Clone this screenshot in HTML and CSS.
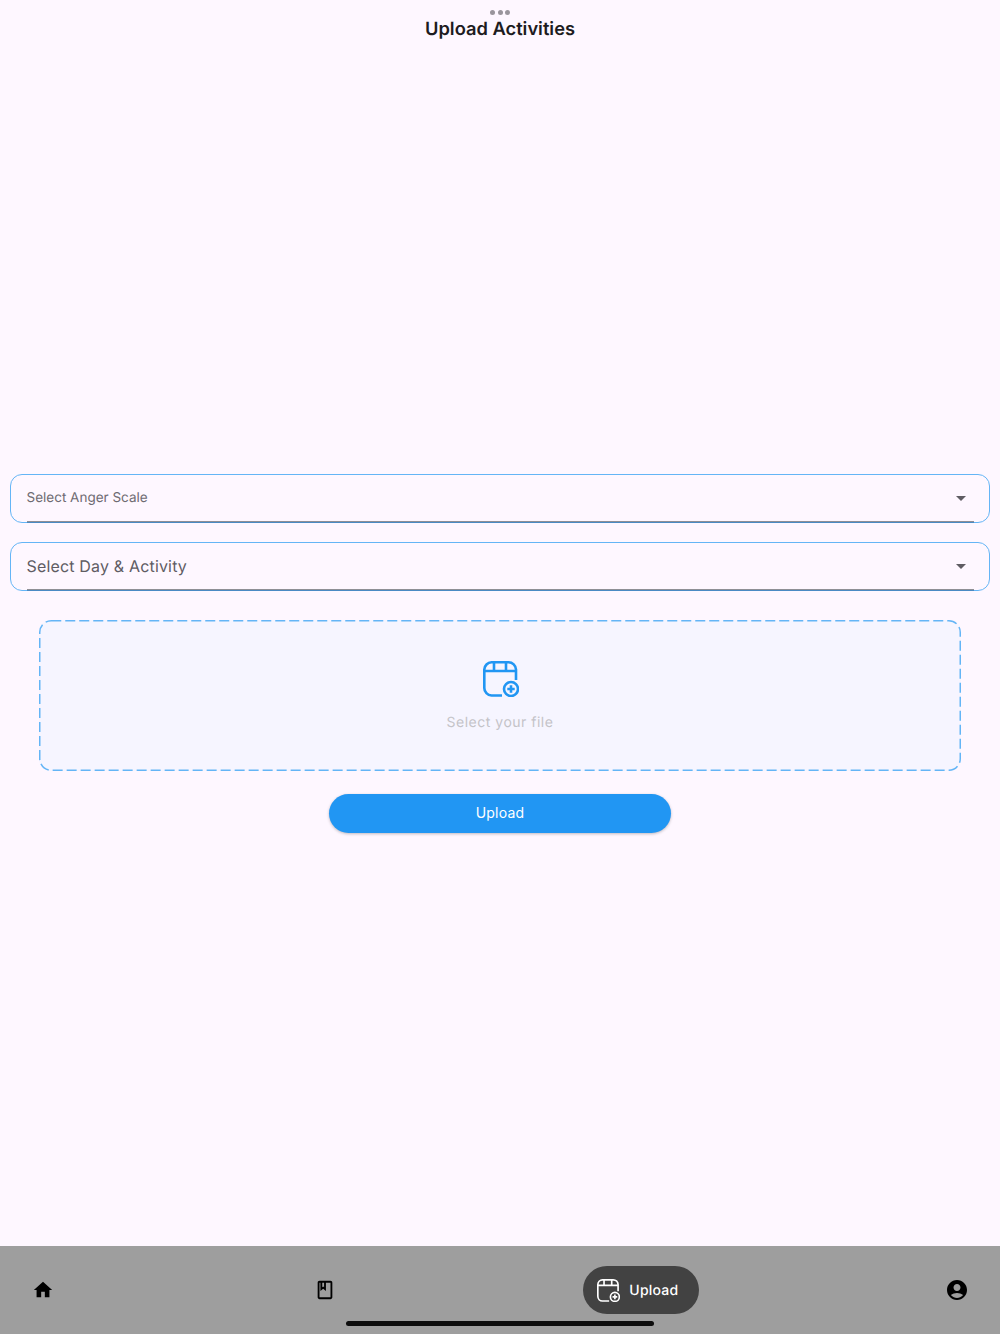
FILE: index.html
```html
<!DOCTYPE html>
<html lang="en">
  <head>
    <meta charset="UTF-8" />
    <title>Upload Activities</title>
    <link rel="stylesheet" href="styles.css">
  </head>
  <body>
    <header class="top-bar">
      <div class="dots"><span></span><span></span><span></span></div>
      <h1>Upload Activities</h1>
    </header>

    <main class="content">
      <div class="select-field">
        <span class="select-label small">Select Anger Scale</span>
        <span class="arrow"></span>
      </div>
      <div class="select-field second">
        <span class="select-label">Select Day &amp; Activity</span>
        <span class="arrow"></span>
      </div>

      <!-- Area de arquivo -->
      <div class="dropzone">
        <svg class="dash" viewBox="0 0 922 151" aria-hidden="true">
          <rect x="0.75" y="0.75" width="920.5" height="149.5" rx="11.5" />
        </svg>
        <svg class="file-icon" viewBox="0 0 36 36" aria-hidden="true">
          <use href="#calendar-plus" />
        </svg>
        <span class="file-text">Select your file</span>
      </div>

      <button class="upload-btn" type="button">Upload</button>
    </main>

    <!-- Navegacao inferior -->
    <nav class="bottom-nav">
      <a class="tab tab-home" href="#">
        <svg viewBox="0 0 24 24" aria-hidden="true">
          <path d="M10 20v-6h4v6h5v-8h3L12 3 2 12h3v8z" />
        </svg>
      </a>
      <a class="tab tab-book" href="#">
        <svg viewBox="0 0 24 24" aria-hidden="true">
          <path d="M18 2H6c-1.1 0-2 .9-2 2v16c0 1.1.9 2 2 2h12c1.1 0 2-.9 2-2V4c0-1.1-.9-2-2-2zM9 4h2v5l-1-.75L9 9V4zm9 16H6V4h1v9l3-2.25L13 13V4h5v16z" />
        </svg>
      </a>
      <a class="tab-active" href="#">
        <svg class="active-icon" viewBox="0 0 36 36" aria-hidden="true">
          <use href="#calendar-plus" />
        </svg>
        <span class="tab-label">Upload</span>
      </a>
      <a class="tab tab-user" href="#">
        <svg viewBox="0 0 24 24" aria-hidden="true">
          <path d="M12 2C6.48 2 2 6.48 2 12s4.48 10 10 10 10-4.48 10-10S17.52 2 12 2zm0 4c1.93 0 3.5 1.57 3.5 3.5S13.93 13 12 13s-3.5-1.57-3.5-3.5S10.07 6 12 6zm0 14c-2.03 0-4.43-.82-6.14-2.88C7.55 15.8 9.68 15 12 15s4.45.8 6.14 2.12C16.43 19.18 14.03 20 12 20z" />
        </svg>
      </a>
      <span class="home-indicator"></span>
    </nav>

    <svg class="defs" aria-hidden="true">
      <symbol id="calendar-plus" viewBox="0 0 36 36">
        <path d="M19 34.500H8.500A7.500 7.500 0 0 1 1.300 27V8.500A7.500 7.500 0 0 1 8.500 1.300h17A7.500 7.500 0 0 1 33 8.500V19" />
        <path d="M1.300 10h31.700M11 1.300v8.700M23 1.300v8.700" />
        <circle class="badge" cx="28" cy="28" r="7" />
        <path d="M28 24.300v7.400M24.300 28h7.400" />
      </symbol>
    </svg>
  </body>
</html>
```

FILE: styles.css
```css
* {
  box-sizing: border-box;
}
body {
  margin: 0;
  height: 1334px;
  background-color: #fef7ff;
  display: flex;
  flex-direction: column;
  font-family: Inter, "Noto Sans", sans-serif;
  text-rendering: geometricPrecision;
  overflow: hidden;
}
/* Topo */
.top-bar {
  height: 474px;
  padding-top: 10px;
  display: flex;
  flex-direction: column;
  align-items: center;
}
.dots {
  display: flex;
  gap: 2.5px;
  height: 5px;
}
.dots span {
  width: 5px;
  height: 5px;
  border-radius: 50%;
  background-color: #9a959c;
}
h1 {
  margin: 2px 0 0;
  font-size: 18.3px;
  line-height: 24px;
  font-weight: 600;
  color: #1d1b20;
}
/* Campos */
.content {
  flex: 1;
  display: flex;
  flex-direction: column;
  align-items: center;
}
.select-field {
  position: relative;
  width: 980px;
  height: 49px;
  border: 1.5px solid #64b5f6;
  border-radius: 12px;
  padding: 0 23px 0 15.5px;
  display: flex;
  align-items: center;
  justify-content: space-between;
}
.select-field::after {
  content: "";
  position: absolute;
  left: 15.5px;
  right: 15.5px;
  bottom: -1px;
  height: 2px;
  background: linear-gradient(#8f8f95 50%, #4a8ac4 50%);
}
.second {
  margin-top: 19px;
}
.select-label {
  font-size: 16px;
  letter-spacing: 0.17px;
  color: #5f5c63;
  margin-bottom: 1px;
}
.select-label.small {
  font-size: 13.5px;
  letter-spacing: 0;
  color: #6e6b72;
}
.arrow {
  width: 0;
  height: 0;
  border-left: 5px solid transparent;
  border-right: 5px solid transparent;
  border-top: 5px solid #5f5c63;
}
/* Area de arquivo */
.dropzone {
  position: relative;
  width: 922px;
  height: 151px;
  margin-top: 29px;
  background-color: #f6f5ff;
  border-radius: 12px;
  padding-top: 41px;
  display: flex;
  flex-direction: column;
  align-items: center;
}
.dash {
  position: absolute;
  top: 0;
  left: 0;
  width: 100%;
  height: 100%;
}
.dash rect {
  fill: none;
  stroke: #64b5f6;
  stroke-width: 1.5;
  stroke-dasharray: 10 4;
}
.file-icon {
  width: 36px;
  height: 36px;
  margin-left: 1px;
  color: #2196f3;
}
.file-text {
  margin-top: 17px;
  font-size: 14px;
  line-height: 17px;
  letter-spacing: 0.5px;
  color: #c4c3c8;
}
symbol path {
  fill: none;
  stroke: currentColor;
  stroke-width: 2.6;
}
.badge {
  fill: none;
  stroke: currentColor;
  stroke-width: 2.6;
}
.upload-btn {
  width: 342px;
  height: 39px;
  margin-top: 23px;
  padding: 0 0 2px;
  border: none;
  border-radius: 20px;
  background-color: #2196f3;
  box-shadow: 0 1px 3px rgba(0, 0, 0, 0.25);
  color: #fff;
  font-family: inherit;
  font-size: 14px;
  font-weight: 400;
  letter-spacing: 0.2px;
}
/* Navegacao inferior */
.bottom-nav {
  position: relative;
  height: 88px;
  background-color: #9e9e9e;
  padding: 20px 31px 20px 32px;
  display: flex;
  justify-content: space-between;
  align-items: flex-start;
}
.tab {
  display: flex;
  align-items: center;
  height: 48px;
}
.tab svg {
  width: 22px;
  height: 22px;
  fill: #000;
}
.tab-home {
  margin-right: 14.5px;
}
.tab-book {
  margin-right: 1.5px;
}
.tab-user svg {
  width: 24px;
  height: 24px;
}
.tab-active {
  width: 116px;
  height: 48px;
  border-radius: 24px;
  background-color: #424242;
  padding-left: 14px;
  display: flex;
  align-items: center;
  gap: 9px;
  color: #fff;
  font-size: 14px;
  font-weight: 500;
  letter-spacing: 0.2px;
  text-decoration: none;
}
.active-icon {
  width: 23px;
  height: 23px;
  color: #fff;
}
.home-indicator {
  position: absolute;
  left: 346px;
  bottom: 8px;
  width: 308px;
  height: 5px;
  border-radius: 3px;
  background-color: #0d0d0d;
}
.defs {
  position: absolute;
  width: 0;
  height: 0;
}
```
